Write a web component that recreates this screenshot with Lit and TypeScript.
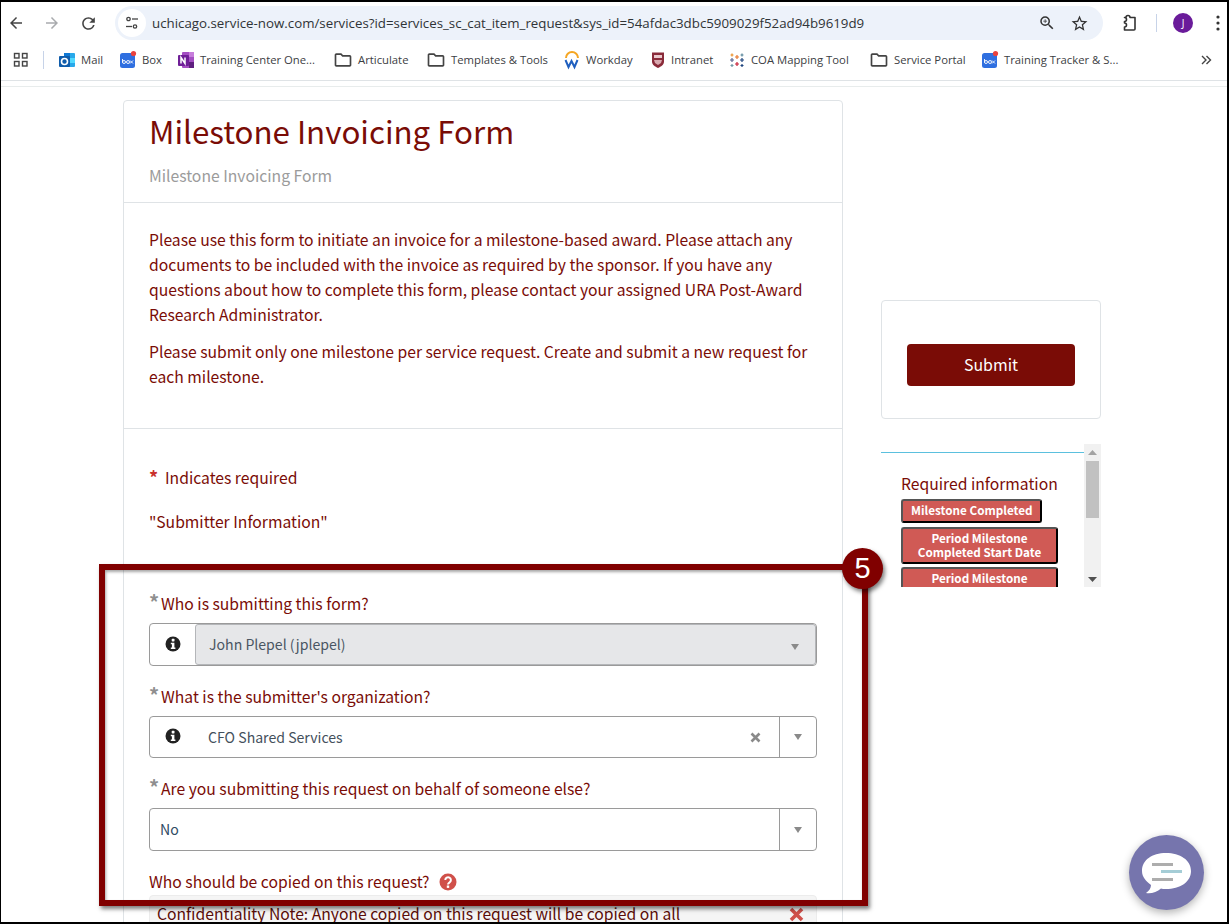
import { LitElement, html, css } from "lit";
import { customElement } from "lit/decorators.js";

const folder = html`<svg width="20" height="20" viewBox="0 0 24 24" fill="#444"><path d="M9.17 6l2 2H20v10H4V6h5.17M10 4H4c-1.1 0-1.99.9-1.99 2L2 18c0 1.1.9 2 2 2h16c1.1 0 2-.9 2-2V8c0-1.1-.9-2-2-2h-8l-2-2z"/></svg>`;
const box = html`<svg width="18" height="20" viewBox="0 0 18 20"><rect x="1" y="3" width="15" height="15" rx="2.5" fill="#2f6fe0"/><circle cx="14.5" cy="3.5" r="2.6" fill="#e8413e"/><path d="M3.5 9v3.5M3.5 12a1.5 1.5 0 1 0 3 0a1.5 1.5 0 1 0-3 0M7.5 12a1.5 1.5 0 1 0 3 0a1.5 1.5 0 1 0-3 0M11 10.500l3 3M14 10.500l-3 3" fill="none" stroke="#fff" stroke-width=".9"/></svg>`;
const outlook = html`<svg width="18" height="20" viewBox="0 0 18 20"><rect x="6" y="3" width="11" height="14" rx="1" fill="#28a8ea"/><rect x="6" y="3" width="6" height="5" fill="#0f78d4"/><rect x="11" y="8" width="6" height="5" fill="#50d9ff"/><rect x="1" y="6" width="11" height="11" rx="1" fill="#0f5cab"/><circle cx="6.500" cy="11.500" r="3" fill="none" stroke="#fff" stroke-width="1.600"/></svg>`;
const onenote = html`<svg width="18" height="20" viewBox="0 0 18 20"><rect x="5" y="2" width="12" height="16" rx="1" fill="#a44ec2"/><rect x="12" y="2" width="5" height="5" fill="#c77ddb"/><rect x="12" y="12" width="5" height="6" fill="#5f1f7f"/><rect x="1" y="5" width="11" height="11" rx="1" fill="#6f1f97"/><path d="M4 13.500v-6l4 6v-6" fill="none" stroke="#fff" stroke-width="1.500"/></svg>`;
const workday = html`<svg width="18" height="20" viewBox="0 0 18 20"><path d="M3 8a6 6 0 0 1 12 0" fill="none" stroke="#f5a623" stroke-width="2"/><path d="M2.500 10l3 7 3-6 3 6 3-7" fill="none" stroke="#1f5fbf" stroke-width="2"/></svg>`;
const shield = html`<svg width="16" height="20" viewBox="0 0 16 20"><path d="M2 2.500h12v9c0 3.500-3 5-6 6.500-3-1.500-6-3-6-6.500z" fill="#8a2b3a"/><rect x="4" y="5" width="8" height="3" fill="#e9c9cd"/><path d="M4 10h8l-1 3-3 2-3-2z" fill="#d9a9b0"/></svg>`;
const tableau = html`<svg width="18" height="20" viewBox="0 0 18 20" fill="none" stroke-width="1.200"><path d="M9 5v4M7 7h4" stroke="#e8762b"/><path d="M9 12v4M7 14h4" stroke="#c72037"/><path d="M4 8v4M2 10h4" stroke="#5b6591"/><path d="M14 8v4M12 10h4" stroke="#1f447e"/><path d="M4 3.500v3M2.500 5h3" stroke="#eb912b"/><path d="M14 3.500v3M12.500 5h3" stroke="#59879b"/><path d="M4 14v3M2.500 15.500h3" stroke="#7099a6"/><path d="M14 14v3M12.500 15.500h3" stroke="#1f447e"/></svg>`;

const bookmarks: { icon: unknown; text: string; w: number; }[] = [
  { icon: outlook, text: "Mail", w: 61 },
  { icon: box, text: "Box", w: 58 },
  { icon: onenote, text: "Training Center One...", w: 156 },
  { icon: folder, text: "Articulate", w: 93 },
  { icon: folder, text: "Templates & Tools", w: 137 },
  { icon: workday, text: "Workday", w: 87 },
  { icon: shield, text: "Intranet", w: 78 },
  { icon: tableau, text: "COA Mapping Tool", w: 141 },
  { icon: folder, text: "Service Portal", w: 112 },
  { icon: box, text: "Training Tracker & S...", w: 130 },
];

const infoIcon = html`<svg class="info" width="16" height="16" viewBox="0 0 16 16"><circle cx="8" cy="8" r="7.500" fill="#222"/><rect x="6.700" y="2.800" width="2.800" height="2.600" rx=".6" fill="#fff"/><path d="M5.800 6.700h3.600v4.700h1v1.600H5.800v-1.600h1.100V8.300H5.800z" fill="#fff"/></svg>`;
const arrow = html`<svg width="10" height="8" viewBox="0 0 10 8"><path d="M1 1h8L5 7z" fill="#8a8a8a"/></svg>`;

@customElement("form-select")
class FormSelect extends LitElement {
  static properties = {
    value: {}, info: { type: Boolean }, disabled: { type: Boolean }, clear: { type: Boolean },
  };
  value = ""; info = false; disabled = false; clear = false;
  static styles = css`
    :host { display: block; }
    .field { display: flex; align-items: stretch; border: 1px solid #9a9a9a; border-radius: 4px; height: 100%; box-sizing: border-box; background: #fff; font: 14.100px/24px "Noto Sans CJK SC", sans-serif; color: #3d4b5c; }
    .addon { width: 45px; flex: none; display: flex; align-items: center; justify-content: center; padding-bottom: 2px; box-sizing: border-box; }
    .main { flex: 1; display: flex; align-items: center; min-width: 0; padding-left: 10px; }
    .main.with-info { padding-left: 13px; }
    .val { flex: 1; color: #2f4a63; padding-bottom: 2px; }
    .with-info .val { color: #44505c; padding-bottom: 1px; }
    .x { margin-right: 18px; display: flex; }
    .arrow { width: 36px; flex: none; border-left: 1px solid #9a9a9a; display: flex; align-items: center; justify-content: center; }
    .disabled { flex: 1; background: #e6e7e9; border: 1px solid #b4b6b9; border-radius: 3px; display: flex; align-items: center; padding-left: 13px; margin: 0; color: #4a5663; }
    .disabled .val { color: #4a5663; }
    .disabled .a2 { margin-right: 15px; margin-top: 4px; display: flex; }
  `;
  render() {
    return html`<div class="field">
      ${this.info ? html`<div class="addon">${infoIcon}</div>` : ""}
      ${this.disabled
        ? html`<div class="disabled"><span class="val">${this.value}</span><span class="a2">${arrow}</span></div>`
        : html`<div class="main ${this.info ? "with-info" : ""}"><span class="val">${this.value}</span>
            ${this.clear ? html`<span class="x"><svg width="11" height="11" viewBox="0 0 11 11"><path d="M1.500 1.500l8 8M9.500 1.500l-8 8" stroke="#8a8a8a" stroke-width="2.600"/></svg></span>` : ""}
          </div><div class="arrow">${arrow}</div>`}
    </div>`;
  }
}

@customElement("app-root")
class AppRoot extends LitElement {
  static styles = css`
    :host { display: block; font-family: "Noto Sans CJK SC", sans-serif; }
    .shell { position: relative; width: 1229px; height: 924px; box-sizing: border-box; border: 2px solid #000; border-left-width: 1px; border-top-width: 2px; background: #fff; overflow: hidden; display: flex; flex-direction: column; }
    .toolbar { height: 42px; flex: none; display: flex; align-items: center; box-sizing: border-box; }
    .nav { width: 36px; display: flex; justify-content: center; flex: none; }
    .navs { display: flex; margin-left: -3px; margin-right: 9px; }
    .omni { width: 988px; height: 34px; background: #edf2fa; border-radius: 17px; display: flex; align-items: center; flex: none; box-sizing: border-box; padding-left: 3px; }
    .tune { width: 28px; height: 28px; border-radius: 50%; background: #fff; display: flex; align-items: center; justify-content: center; flex: none; }
    .url { flex: 1; margin-left: 6px; font: 13.300px/20px "Open Sans", sans-serif; color: #303437; white-space: nowrap; }
    .omni-icons { display: flex; align-items: center; gap: 14px; margin-right: 14px; }
    .ext { margin-left: 16px; display: flex; }
    .vsep { width: 1px; height: 18px; background: #c7d3e8; margin-left: 17px; }
    .avatar { width: 20px; height: 20px; border-radius: 50%; background: #6a1b9a; color: #fff; font: 10px/20px "Open Sans", sans-serif; text-align: center; margin-left: 16px; flex: none; }
    .kebab { display: flex; margin-left: 23px; }
    .bookmarks { height: 36px; flex: none; display: flex; align-items: center; position: relative; box-sizing: border-box; padding: 0 0 4px 12px; }
    .apps { display: flex; }
    .bsep { width: 1px; height: 18px; background: #c7d3e8; margin: 0 5px 0 14px; flex: none; }
    .bm { display: flex; align-items: center; gap: 5px; font: 11.300px/16px "Open Sans", sans-serif; color: #3c4043; white-space: nowrap; flex: none; box-sizing: border-box; padding-left: 9px; }
    .bm svg { flex: none; }
    .more { margin-left: auto; margin-right: 15px; display: flex; }
    .rule { height: 1px; background: #dfe3e6; flex: none; }
    .gap { height: 5px; flex: none; }
    .rule2 { background: #e8ecec; }
    .page { flex: 1; min-height: 0; display: flex; align-items: flex-start; overflow: hidden; padding: 13px 0 0 122px; }
    .card { width: 720px; flex: none; box-sizing: border-box; border: 1px solid #dfe3e6; border-radius: 4px; color: #7a0c06; }
    .head { padding: 10px 25px 14px; border-bottom: 1px solid #dfe3e6; }
    h1 { margin: 0; font-size: 31.300px; line-height: 40px; font-weight: 400; color: #7a0c06; }
    .sub { margin-top: 12px; font-size: 15.700px; line-height: 25px; color: #9b9b9b; }
    .intro { padding: 24px 25px 39px; border-bottom: 1px solid #dfe3e6; font-size: 15.700px; line-height: 25px; }
    .intro p { margin: 0 0 12px; }
    .intro p:last-child { margin: 0; }
    .form { padding: 36px 25px 0; font-size: 15.700px; line-height: 25px; }
    .req { display: flex; align-items: center; }
    .star { color: #c9302c; font-weight: 700; font-size: 18px; width: 16px; flex: none; }
    .sec { margin-top: 19px; height: 64px; }
    .lab { display: flex; height: 24px; line-height: 24px; font-size: 15.700px; margin-top: 19px; }
    .lab .ast { width: 12px; color: #8f8f8f; font-weight: 700; font-size: 20px; flex: none; line-height: 20px; }
    .lab.q { align-items: center; gap: 9px; }
    .f1 { margin-top: 7px; height: 43px; }
    .f2 { margin-top: 7px; height: 42px; }
    .alert { margin-top: 1px; background: #f5f5f5; border: 1px solid #ececec; border-radius: 4px; height: 60px; box-sizing: border-box; padding: 5px 12px 0 7px; display: flex; justify-content: space-between; color: #5b0d08; font-size: 15.700px; line-height: 26px; }
    .alert svg { margin-top: 6px; flex: none; margin-right: 0; }
    .side { width: 220px; margin-left: 38px; flex: none; padding-top: 200px; }
    .submit-card { box-sizing: border-box; height: 119px; border: 1px solid #dfe3e6; border-radius: 4px; padding: 43px 25px 0; }
    button { display: block; width: 168px; height: 42px; background: #7a0c06; border: 0; border-radius: 4px; color: #fff; font: 15.900px/40px "Noto Sans CJK SC", sans-serif; padding: 0; }
    .scroller { margin-top: 25px; height: 143px; display: flex; overflow: hidden; position: relative; }
    .scroll-body { width: 203px; flex: none; }
    .blue { height: 1px; background: #5bc0de; margin-top: 8px; }
    .rtitle { margin: 19px 0 3px 20px; font-size: 15.700px; line-height: 24px; color: #7a0c06; }
    .tags { display: flex; flex-direction: column; align-items: flex-start; gap: 3px; margin-left: 20px; }
    .tag { background: #d05a55; color: #fff; font-weight: 700; font-size: 11.700px; line-height: 14px; text-align: center; padding: 2px 8px; border: 2px solid; border-color: #555 #000 #000 #555; border-radius: 3px; box-sizing: border-box; }
    .t1 { width: 141px; height: 24px; white-space: nowrap; margin-bottom: 1px; }
    .t2 { width: 157px; height: 37px; }
    .bar { width: 17px; flex: none; background: #f1f1f1; position: relative; display: flex; flex-direction: column; justify-content: space-between; align-items: center; padding: 6px 0 5px; box-sizing: border-box; }
    .thumb { position: absolute; left: 2px; top: 17px; width: 13px; height: 57px; background: #c1c1c1; }
    .frame { position: absolute; left: 98px; top: 562px; width: 769px; height: 342px; box-sizing: border-box; border: 6px solid #800000; box-shadow: 2px 3px 4px rgba(0,0,0,.5), inset 1px 2px 3px rgba(0,0,0,.35); pointer-events: none; }
    .badge { position: absolute; left: 841px; top: 546px; width: 41px; height: 41px; border-radius: 50%; background: #800000; color: #fff; font: 29px/41px "Liberation Sans", sans-serif; text-align: center; box-shadow: 2px 3px 4px rgba(0,0,0,.5); }
    .chat { position: absolute; left: 1128px; top: 833px; width: 75px; height: 75px; border-radius: 50%; background: #7675ad; box-shadow: 0 3px 8px rgba(0,0,0,.3); display: flex; align-items: center; justify-content: center; }
  `;

  render() {
    return html`<div class="shell">
      <div class="toolbar">
        <div class="navs">
          <span class="nav"><svg width="18" height="18" viewBox="0 0 24 24" fill="#444"><path d="M20 11H7.830l5.590-5.590L12 4l-8 8 8 8 1.410-1.410L7.830 13H20v-2z"/></svg></span>
          <span class="nav"><svg width="18" height="18" viewBox="0 0 24 24" fill="#a9abae"><path d="M4 13h12.170l-5.590 5.590L12 20l8-8-8-8-1.410 1.410L16.170 11H4v2z"/></svg></span>
          <span class="nav"><svg width="19" height="19" viewBox="0 0 24 24" fill="#444"><path d="M17.650 6.350A7.958 7.958 0 0 0 12 4c-4.420 0-7.990 3.580-7.990 8s3.570 8 7.990 8c3.730 0 6.840-2.550 7.730-6h-2.080A5.990 5.990 0 0 1 12 18c-3.310 0-6-2.690-6-6s2.690-6 6-6c1.660 0 3.140.690 4.220 1.780L13 11h7V4l-2.350 2.350z"/></svg></span>
        </div>
        <div class="omni">
          <span class="tune"><svg width="16" height="16" viewBox="0 0 16 16" fill="none" stroke="#444" stroke-width="1.300"><circle cx="4.500" cy="4" r="1.700"/><path d="M8 4h6"/><circle cx="11" cy="11.500" r="1.700"/><path d="M2 11.500h6"/></svg></span>
          <span class="url">uchicago.service-now.com/services?id=services_sc_cat_item_request&amp;sys_id=54afdac3dbc5909029f52ad94b9619d9</span>
          <span class="omni-icons">
            <svg width="18" height="18" viewBox="0 0 24 24" fill="#333"><path d="M15.500 14h-.790l-.280-.270A6.471 6.471 0 0 0 16 9.500 6.500 6.500 0 1 0 9.500 16c1.610 0 3.090-.590 4.230-1.570l.270.280v.790l5 4.990L20.490 19l-4.990-5zm-6 0C7.010 14 5 11.990 5 9.500S7.010 5 9.500 5 14 7.010 14 9.500 11.990 14 9.500 14z"/><path d="M12 10h-2v2H9v-2H7V9h2V7h1v2h2v1z"/></svg>
            <svg width="19" height="19" viewBox="0 0 24 24" fill="#333"><path d="M22 9.240l-7.190-.620L12 2 9.190 8.630 2 9.240l5.460 4.730L5.820 21 12 17.270 18.180 21l-1.630-7.030L22 9.240zM12 15.400l-3.760 2.270 1-4.280-3.320-2.880 4.380-.380L12 6.100l1.710 4.040 4.380.380-3.320 2.880 1 4.280L12 15.400z"/></svg>
          </span>
        </div>
        <span class="ext"><svg width="20" height="20" viewBox="0 0 20 20" fill="none" stroke="#333" stroke-width="1.600"><path d="M7 4.500a2 2 0 0 1 4 0h5v11.500a1 1 0 0 1-1 1H5.500v-3a2 2 0 0 0 0-4V8.500a2 2 0 0 0 0-4z" stroke-linejoin="round"/></svg></span>
        <span class="vsep"></span>
        <span class="avatar">J</span>
        <span class="kebab"><svg width="4" height="16" viewBox="0 0 4 16" fill="#333"><circle cx="2" cy="2" r="1.600"/><circle cx="2" cy="8" r="1.600"/><circle cx="2" cy="14" r="1.600"/></svg></span>
      </div>
      <div class="bookmarks">
        <span class="apps"><svg width="16" height="16" viewBox="0 0 16 16" fill="none" stroke="#444" stroke-width="1.400"><rect x="1.500" y="1.500" width="4.500" height="4.500"/><rect x="9.500" y="1.500" width="4.500" height="4.500"/><rect x="1.500" y="9.500" width="4.500" height="4.500"/><rect x="9.500" y="9.500" width="4.500" height="4.500"/></svg></span>
        <span class="bsep"></span>
        ${bookmarks.map((b) => html`<span class="bm" style="width:${b.w}px">${b.icon}${b.text}</span>`)}
        <span class="more"><svg width="12" height="12" viewBox="0 0 12 12" fill="none" stroke="#444" stroke-width="1.400"><path d="M2 2l4 4-4 4M6.500 2l4 4-4 4"/></svg></span>
      </div>
      <div class="rule"></div>
      <div class="gap"></div>
      <div class="rule rule2"></div>
      <div class="page">
        <div class="card">
          <div class="head">
            <h1>Milestone Invoicing Form</h1>
            <div class="sub">Milestone Invoicing Form</div>
          </div>
          <div class="intro">
            <p>Please use this form to initiate an invoice for a milestone-based award. Please attach any documents to be included with the invoice as required by the sponsor. If you have any questions about how to complete this form, please contact your assigned URA Post-Award Research Administrator.</p>
            <p>Please submit only one milestone per service request. Create and submit a new request for each milestone.</p>
          </div>
          <div class="form">
            <div class="req"><span class="star">*</span>Indicates required</div>
            <div class="sec">"Submitter Information"</div>
            <div class="lab"><span class="ast">*</span>Who is submitting this form?</div>
            <form-select class="f1" value="John Plepel (jplepel)" info disabled></form-select>
            <div class="lab"><span class="ast">*</span>What is the submitter's organization?</div>
            <form-select class="f2" value="CFO Shared Services" info clear></form-select>
            <div class="lab"><span class="ast">*</span>Are you submitting this request on behalf of someone else?</div>
            <form-select class="f1" value="No"></form-select>
            <div class="lab q">Who should be copied on this request?
              <svg width="18" height="18" viewBox="0 0 18 18"><circle cx="9" cy="9" r="8.500" fill="#d0504a"/><path d="M6.300 7a2.800 2.700 0 1 1 4.300 2.300c-1 .6-1.600 1-1.600 2.200" fill="none" stroke="#fff" stroke-width="2"/><rect x="7.800" y="12.500" width="2.400" height="2.400" fill="#fff"/></svg>
            </div>
            <div class="alert">Confidentiality Note: Anyone copied on this request will be copied on all
              <svg width="15" height="15" viewBox="0 0 15 15"><path d="M2 2l11 11M13 2L2 13" stroke="#d0504a" stroke-width="3.600"/></svg>
            </div>
          </div>
        </div>
        <div class="side">
          <div class="submit-card"><button>Submit</button></div>
          <div class="scroller">
            <div class="scroll-body">
              <div class="blue"></div>
              <div class="rtitle">Required information</div>
              <div class="tags">
                <div class="tag t1">Milestone Completed</div>
                <div class="tag t2">Period Milestone Completed Start Date</div>
                <div class="tag t2">Period Milestone Completed End Date</div>
              </div>
            </div>
            <div class="bar">
              <svg width="9" height="5" viewBox="0 0 9 5"><path d="M0 5h9L4.500 0z" fill="#a3a3a3"/></svg>
              <span class="thumb"></span>
              <svg width="9" height="5" viewBox="0 0 9 5"><path d="M0 0h9L4.500 5z" fill="#505050"/></svg>
            </div>
          </div>
        </div>
      </div>
      <div class="frame"></div>
      <div class="badge">5</div>
      <div class="chat"><svg width="52" height="44" viewBox="0 0 52 44"><path d="M25 2c14 0 25 7 25 18s-11 18-25 18c-2 0-4 0-5-.500C16 41 10 43 5 42c3-2 5-5 5-8C5 30 1 26 1 20 1 9 11 2 25 2z" fill="#fff"/><rect x="11" y="12" width="21" height="3" fill="#adadad"/><rect x="20" y="19" width="21" height="3" fill="#a5cdd6"/><rect x="11" y="27" width="21" height="3" fill="#adadad"/></svg></div>
    </div>`;
  }
}
